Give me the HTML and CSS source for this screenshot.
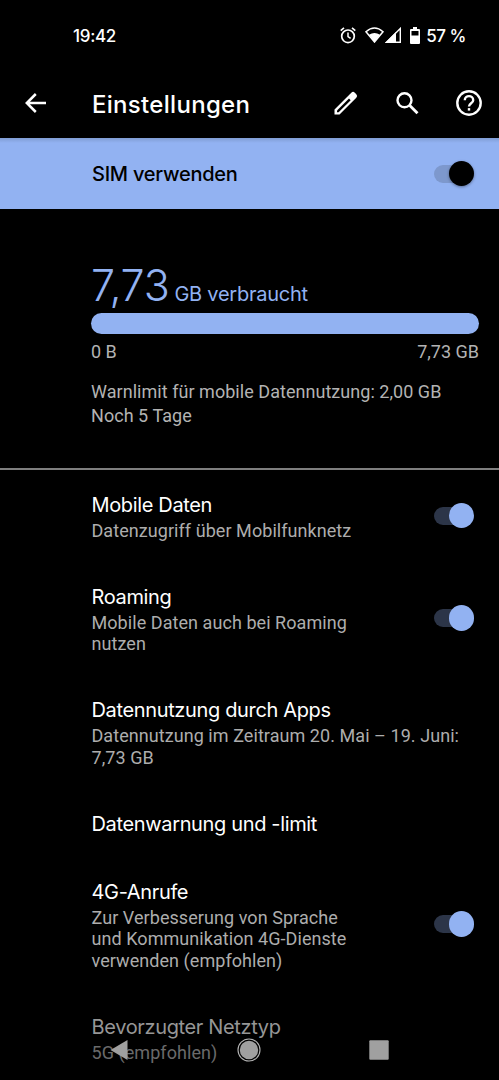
FILE: index.html
```html
<!DOCTYPE html>
<html lang="de">
<head>
  <meta charset="UTF-8">
  <meta name="viewport" content="width=device-width, initial-scale=1.0">
  <title>Einstellungen</title>
  <link rel="stylesheet" href="styles.css">
</head>
<body>
  <div class="screen">
    <div class="statusbar">
      <span class="clock">19:42</span>
      <div class="status-icons">
        <svg class="alarm" width="16" height="17" viewBox="0 0 16 17" fill="none" stroke="#fff">
          <circle cx="8" cy="9.3" r="6.3" stroke-width="1.7"/>
          <path d="M8 5.5v4l2.6 1.9" stroke-width="1.5"/>
          <path d="M.7 3.6L4 .9M15.3 3.6L12 .9" stroke-width="1.7"/>
        </svg>
        <svg class="wifi" width="19" height="16" viewBox="0 0 19 16">
          <path d="M1 4.7Q9.5-2.7 18 4.7L9.5 15z" fill="none" stroke="#fff" stroke-width="1.5"/>
          <path d="M4 7.800Q9.5 4.200 15 7.800L9.5 15z" fill="#fff"/>
        </svg>
        <svg class="signal" width="17" height="16" viewBox="0 0 17 16">
          <path d="M1.5 15.3L15.3 1.5v13.800z" fill="none" stroke="#fff" stroke-width="1.4"/>
          <path d="M0 16L11 5v11z" fill="#fff"/>
        </svg>
        <svg class="battery" width="10" height="17" viewBox="0 0 10 17">
          <path d="M3 0h4v2h2q1 0 1 1v13q0 1-1 1H1q-1 0-1-1V3q0-1 1-1h2z" fill="#fff"/>
          <path d="M1.5 4h7v4.500h-7z" fill="#000"/>
        </svg>
        <span class="percent">57 %</span>
      </div>
    </div>

    <header class="appbar">
      <svg class="back" width="22" height="20" viewBox="0 0 22 20" fill="none" stroke="#fff" stroke-width="2.5">
        <path d="M21 10H2M10.8 1L1.8 10l9 9"/>
      </svg>
      <h1>Einstellungen</h1>
      <div class="actions">
        <svg width="24" height="24" viewBox="0 0 24 24">
          <path d="M.5 18.5L17.3 1.7q1.8-1.7 3.5 0l1.5 1.5q1.7 1.7 0 3.5L5.5 23.5h-5z" fill="#fff"/>
          <path d="M3 19.5L15 7.5l1.700 1.700L4.600 21.300H3z" fill="#000"/>
        </svg>
        <svg width="24" height="24" viewBox="0 0 24 24" fill="none" stroke="#fff">
          <circle cx="9.5" cy="9.3" r="7" stroke-width="2.4"/>
          <path d="M14.5 14.3l8 8" stroke-width="2.9"/>
        </svg>
        <svg width="26" height="26" viewBox="0 0 26 26" fill="none" stroke="#fff" stroke-width="2.4">
          <circle cx="13" cy="13" r="11.7"/>
          <path d="M8.8 10.200c0-5.400 8.400-5.400 8.400 0 0 3-4.200 3.200-4.200 6.300"/>
          <path d="M13 18.100v2.500"/>
        </svg>
      </div>
    </header>

    <div class="sim-bar">
      <span>SIM verwenden</span>
      <div class="switch dark"></div>
    </div>

    <section class="usage">
      <div class="used"><span class="amount">7,73</span><span class="unit">GB verbraucht</span></div>
      <div class="progress"></div>
      <div class="range"><span>0 B</span><span>7,73 GB</span></div>
      <p class="limit">Warnlimit für mobile Datennutzung: 2,00 GB<br>Noch 5 Tage</p>
    </section>

    <main class="list">
      <div class="row">
        <div class="text">
          <h2>Mobile Daten</h2>
          <p>Datenzugriff über Mobilfunknetz</p>
        </div>
        <div class="switch"></div>
      </div>
      <div class="row">
        <div class="text">
          <h2>Roaming</h2>
          <p>Mobile Daten auch bei Roaming<br>nutzen</p>
        </div>
        <div class="switch"></div>
      </div>
      <div class="row">
        <div class="text">
          <h2>Datennutzung durch Apps</h2>
          <p>Datennutzung im Zeitraum 20. Mai – 19. Juni:<br>7,73 GB</p>
        </div>
      </div>
      <div class="row">
        <div class="text">
          <h2>Datenwarnung und -limit</h2>
        </div>
      </div>
      <div class="row">
        <div class="text">
          <h2>4G-Anrufe</h2>
          <p>Zur Verbesserung von Sprache<br>und Kommunikation 4G-Dienste<br>verwenden (empfohlen)</p>
        </div>
        <div class="switch"></div>
      </div>
      <div class="row disabled">
        <div class="text">
          <h2>Bevorzugter Netztyp</h2>
          <p>5G (empfohlen)</p>
        </div>
      </div>
    </main>

    <nav class="navbar">
      <svg width="24" height="24" viewBox="0 0 24 24"><path d="M3.5 12L20.5 2v20z"/></svg>
      <svg width="24" height="24" viewBox="0 0 24 24"><circle cx="12" cy="12" r="9.2"/><circle cx="12" cy="12" r="11" fill="none" stroke="#b4b4b4" stroke-width="1.1"/></svg>
      <svg width="24" height="24" viewBox="0 0 24 24"><rect x="2.3" y="2.3" width="19.4" height="19.4" rx="1"/></svg>
    </nav>
  </div>
</body>
</html>
```
FILE: styles.css
```css
* { box-sizing: border-box; }
body { margin: 0; background: #000; color: #fff; font-family: Roboto, sans-serif; }
h1, h2, p { margin: 0; font-weight: 400; }
svg { display: block; flex: none; }
.screen { position: relative; width: 499px; height: 1080px; overflow: hidden; }

.statusbar { height: 70px; padding: 2px 33px 0 73px; display: flex; justify-content: space-between; align-items: center; font: 500 17px Inter, sans-serif; }
.clock { letter-spacing: -0.3px; }
.status-icons { display: flex; align-items: center; }
.alarm, .wifi, .signal, .battery { margin-bottom: 2px; }
.wifi { margin-left: 9px; }
.signal { margin-left: 1px; }
.battery { margin-left: 8px; }
.percent { margin-left: 6px; letter-spacing: -0.5px; }

.appbar { height: 68px; padding: 0 17px 2px 25px; display: flex; align-items: center; }
.appbar h1 { margin: 2px 0 0 45px; font: 500 24px Inter, sans-serif; letter-spacing: 0.3px; white-space: nowrap; }
.actions { display: flex; align-items: center; gap: 37px; margin-left: auto; }

.sim-bar { height: 71px; padding: 0 25px 0 92px; display: flex; align-items: center; justify-content: space-between; background: linear-gradient(#809dd4, #92b2f2 5px); color: #000; font: 500 20px Inter, sans-serif; letter-spacing: -0.25px; }

.switch { position: relative; flex: none; width: 40px; height: 26px; }
.switch::before { content: ""; position: absolute; left: 0; top: 4px; width: 34px; height: 18px; border-radius: 9px; background: #2c3548; }
.switch::after { content: ""; position: absolute; right: 0; top: 0; width: 25.5px; height: 25.5px; border-radius: 50%; background: #92b2f2; }
.switch.dark::before { background: #7d98cd; }
.switch.dark::after { background: #000; box-shadow: 0 1px 3px rgba(0,0,0,0.4); }

.usage { height: 261px; padding: 50px 20px 0 91px; border-bottom: 2px solid #7f7f7f; color: #b3b3b3; font-size: 18px; }
.used { display: flex; align-items: baseline; height: 54px; line-height: 52px; color: #92b2f2; font-family: Inter, sans-serif; white-space: nowrap; }
.amount { font-size: 43px; font-weight: 350; letter-spacing: -0.3px; }
.unit { margin-left: 5px; font-size: 20px; letter-spacing: -0.25px; }
.progress { height: 21px; border-radius: 11px; background: #92b2f2; }
.range { display: flex; justify-content: space-between; margin-top: 7px; line-height: 22px; }
.limit { margin-top: 17px; line-height: 24.3px; letter-spacing: 0.04px; }

.list { padding-top: 1px; }
.row { display: flex; justify-content: space-between; align-items: center; padding: 21px 25px 21.5px 91.5px; }
.row h2 { font: 400 20px/26px Inter, sans-serif; letter-spacing: -0.35px; white-space: nowrap; }
.row p { margin-top: 2px; color: #adadad; font-size: 18px; line-height: 21.4px; letter-spacing: 0.06px; white-space: nowrap; }
.row .switch { margin-top: -2px; }
.disabled h2 { color: #969696; }
.disabled p { color: #6a6a6a; }

.navbar { position: absolute; left: 0; right: 0; bottom: 0; height: 60px; padding: 0 108px 0 107px; display: flex; justify-content: space-between; align-items: center; fill: #a0a0a0; }
```
